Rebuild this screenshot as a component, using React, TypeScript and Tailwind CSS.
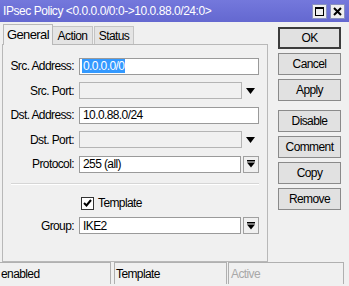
const font = { fontFamily: '"Liberation Sans", Arial, sans-serif' }

function DropArrow() {
  return (
    <div className="w-[17px] flex items-center justify-center">
      <svg width="9" height="6" viewBox="0 0 9 6">
        <path d="M0 0h9L4.5 6z" fill="#000" />
      </svg>
    </div>
  )
}

function ComboButton() {
  return (
    <div className="ml-[2px] w-[16px] h-[17px] border border-[#a0a0a0] bg-[#f0f0f0] flex items-center justify-center">
      <svg width="8" height="8" viewBox="0 0 8 8">
        <rect x="0" y="0" width="8" height="1.5" fill="#000" />
        <path d="M0 2.5h8L4 7.5z" fill="#000" />
      </svg>
    </div>
  )
}

function Row({ label, children }: { label: string; children: React.ReactNode }) {
  return (
    <div className="flex items-center h-[24.5px]">
      <div className="w-[72px] text-right pr-[1px] whitespace-nowrap text-black">{label}</div>
      <div className="ml-[4px] flex items-center">{children}</div>
    </div>
  )
}

function Btn({ label, main }: { label: string; main?: boolean }) {
  return (
    <div
      className={`w-[63px] h-[22px] flex items-center justify-center text-black bg-[#e1e1e1] ${
        main ? 'border-2 border-[#3c3c3c]' : 'border border-[#8a8a8a]'
      }`}
    >
      {label}
    </div>
  )
}

export default function App() {
  return (
    <div
      className="w-[349px] h-[286px] bg-[#f0f0f0] flex flex-col overflow-hidden text-[12px] tracking-[-0.6px]"
      style={font}
    >
      {/* Title bar */}
      <div className="h-[22px] bg-gradient-to-b from-[#7478dc] to-[#6468d0] flex items-center pl-[3px] pr-[4px]">
        <div className="flex-1 text-white text-[12px] tracking-[-0.45px] whitespace-nowrap">
          IPsec Policy &lt;0.0.0.0/0:0-&gt;10.0.88.0/24:0&gt;
        </div>
        <div className="flex gap-[3px]">
          <div className="w-[15px] h-[15px] bg-[#eeeeee] border border-[#8890c0] flex items-center justify-center">
            <div className="w-[9px] h-[9px] border border-black border-t-2" />
          </div>
          <div className="w-[15px] h-[15px] bg-[#eeeeee] border border-[#8890c0] flex items-center justify-center">
            <svg width="9" height="9" viewBox="0 0 9 9">
              <path d="M1 1l7 7M8 1l-7 7" stroke="#000" strokeWidth="2" />
            </svg>
          </div>
        </div>
      </div>

      <div className="flex flex-1">
        {/* Left: tabs + panel */}
        <div className="w-[268px] pl-[2px] flex flex-col">
          <div className="flex items-end h-[22px] pl-[1px] text-black">
            <div className="h-[21px] w-[50px] flex items-center justify-center bg-[#f0f0f0] border border-b-0 border-[#b8b8b8] relative top-[1px] text-[13px]">
              General
            </div>
            <div className="h-[18px] w-[40px] flex items-center justify-center bg-[#e4e4e4] border border-b-0 border-l-0 border-[#c4c4c4]">
              Action
            </div>
            <div className="h-[18px] w-[40px] ml-[1px] flex items-center justify-center bg-[#e4e4e4] border border-b-0 border-[#c4c4c4]">
              Status
            </div>
          </div>
          <div className="h-[218px] border border-[#b8b8b8] pt-[9px] flex flex-col">
            <Row label="Src. Address:">
              <div className="w-[180px] h-[17px] bg-white border border-[#9a9a9a] flex items-center pl-[2px]">
                <span className="bg-[#3399ff] text-white leading-[14px] px-[1px]">0.0.0.0/0</span>
              </div>
            </Row>
            <Row label="Src. Port:">
              <div className="w-[163px] h-[17px] bg-[#f0f0f0] border border-[#b4b4b4]" />
              <DropArrow />
            </Row>
            <Row label="Dst. Address:">
              <div className="w-[180px] h-[17px] bg-white border border-[#9a9a9a] flex items-center pl-[3px]">
                10.0.88.0/24
              </div>
            </Row>
            <Row label="Dst. Port:">
              <div className="w-[163px] h-[17px] bg-[#f0f0f0] border border-[#b4b4b4]" />
              <DropArrow />
            </Row>
            <Row label="Protocol:">
              <div className="w-[162px] h-[17px] bg-white border border-[#9a9a9a] flex items-center pl-[3px]">
                255 (all)
              </div>
              <ComboButton />
            </Row>
            <div className="mt-[6px] ml-[8px] mr-[8px] border-t border-[#d6d6d6] border-b border-b-white" />
            <div className="flex items-center h-[21px] mt-[8px] pl-[78px]">
              <div className="w-[13px] h-[13px] bg-white border border-[#333] flex items-center justify-center">
                <svg width="9" height="8" viewBox="0 0 9 8">
                  <path d="M1 4l2.5 2.5L8 1" stroke="#000" strokeWidth="2" fill="none" />
                </svg>
              </div>
              <span className="ml-[4px]">Template</span>
            </div>
            <Row label="Group:">
              <div className="w-[162px] h-[17px] bg-white border border-[#9a9a9a] flex items-center pl-[3px]">
                IKE2
              </div>
              <ComboButton />
            </Row>
          </div>
        </div>

        {/* Right: buttons */}
        <div className="ml-[10px] pt-[5px] flex flex-col">
          <Btn label="OK" main />
          <div className="mt-[4px]"><Btn label="Cancel" /></div>
          <div className="mt-[4px]"><Btn label="Apply" /></div>
          <div className="mt-[9px]"><Btn label="Disable" /></div>
          <div className="mt-[4px]"><Btn label="Comment" /></div>
          <div className="mt-[4px]"><Btn label="Copy" /></div>
          <div className="mt-[4px]"><Btn label="Remove" /></div>
        </div>
      </div>

      {/* Status bar */}
      <div className="h-[22px] mb-[2px] flex">
        <div className="w-[111px] border-t border-r border-[#b0b0b0] flex items-center pl-[1px]">enabled</div>
        <div className="w-[113px] ml-[3px] border-t border-l border-r border-[#b0b0b0] flex items-center pl-[1px]">Template</div>
        <div className="w-[116px] ml-[1px] border-t border-l border-r border-[#b0b0b0] flex items-center pl-[2px] text-[#a8a8a8]">Active</div>
      </div>
    </div>
  )
}
